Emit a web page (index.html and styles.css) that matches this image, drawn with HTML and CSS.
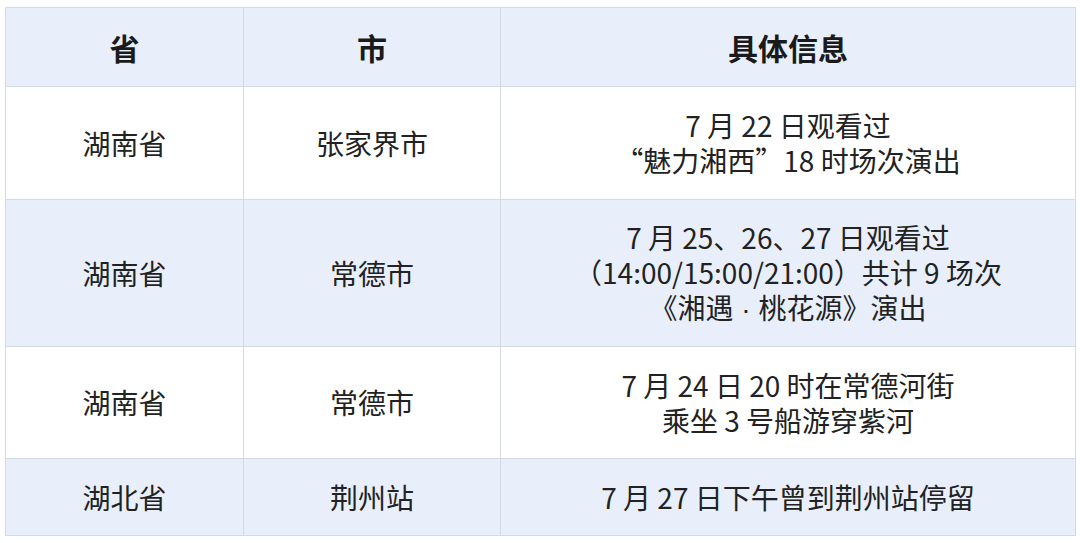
FILE: index.html
```html
<!DOCTYPE html>
<html lang="zh">
<head>
<meta charset="utf-8">
<link rel="stylesheet" href="styles.css">
</head>
<body>
<table class="info">
  <colgroup>
    <col class="c1"><col class="c2"><col class="c3">
  </colgroup>
  <thead>
    <tr class="head"><th>省</th><th>市</th><th>具体信息</th></tr>
  </thead>
  <tbody>
    <tr class="r1 white"><td>湖南省</td><td>张家界市</td><td>7 月 22 日观看过<br>“魅力湘西”18 时场次演出</td></tr>
    <tr class="r2 blue"><td>湖南省</td><td>常德市</td><td>7 月 25、26、27 日观看过<br>（14:00/15:00/21:00）共计 9 场次<br>《湘遇<span class="dot"> · </span>桃花源》演出</td></tr>
    <tr class="r3 white"><td>湖南省</td><td>常德市</td><td>7 月 24 日 20 时在常德河街<br>乘坐 3 号船游穿紫河</td></tr>
    <tr class="r4 blue"><td>湖北省</td><td>荆州站</td><td>7 月 27 日下午曾到荆州站停留</td></tr>
  </tbody>
</table>
</body>
</html>
```
FILE: styles.css
```css
html, body {
  margin: 0;
  padding: 0;
  background: #ffffff;
}
body {
  padding: 7px 0 0 5px;
  font-family: "Noto Sans CJK SC", "Noto Sans", sans-serif;
  color: #222222;
}
.info {
  border-collapse: collapse;
  table-layout: fixed;
  width: 1070px;
}
.c1 { width: 238px; }
.c2 { width: 257px; }
.c3 { width: 575px; }
.info th, .info td {
  border: 1px solid #d3dae4;
  text-align: center;
  vertical-align: middle;
  padding: 0;
  font-size: 28px;
  line-height: 35px;
}
.info th {
  font-size: 30px;
  font-weight: 700;
  color: #1a1a1a;
}
.dot {
  font-family: "Liberation Sans", sans-serif;
}
.head { height: 79px; background: #e8effb; }
.r1 { height: 113px; }
.r2 { height: 147px; }
.r3 { height: 112px; }
.r4 { height: 77px; }
.white { background: #ffffff; }
.blue { background: #e8effb; }
```
